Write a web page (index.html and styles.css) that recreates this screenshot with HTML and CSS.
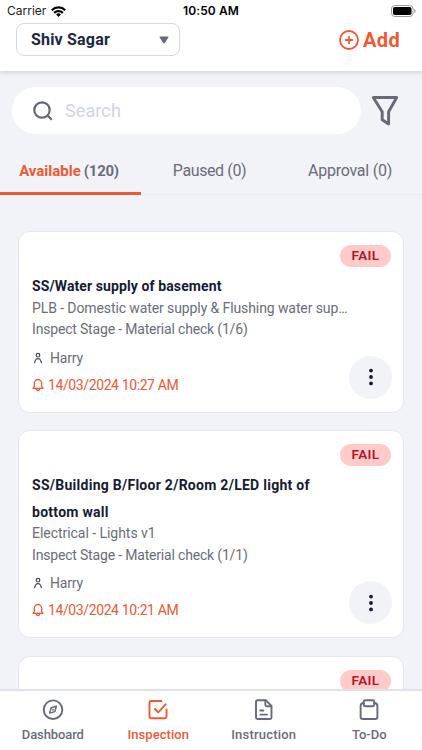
FILE: index.html
```html
<!DOCTYPE html>
<html lang="en">
<head>
<meta charset="utf-8">
<title>Inspection</title>
<link rel="stylesheet" href="styles.css">
</head>
<body>
<svg class="sprite" aria-hidden="true">
  <symbol id="person" viewBox="0 0 10 12"><g fill="none" stroke="#3f4654" stroke-width="1.2" stroke-linecap="round" stroke-linejoin="round"><circle cx="5" cy="3.2" r="1.8"/><path d="M1.6 10.6 2.4 8.400Q3 6.700 5 6.700T7.600 8.400L8.400 10.600"/></g></symbol>
  <symbol id="bell" viewBox="0 0 12 14"><g fill="none" stroke="#ee5934" stroke-width="1.3" stroke-linecap="round" stroke-linejoin="round"><path d="M1 10.300 2.300 8.600V5.200a3.700 3.700 0 0 1 7.400 0v3.400L11 10.300Z"/><path d="M4.300 10.500v.3a1.700 1.700 0 0 0 3.400 0v-.3"/></g></symbol>
  <symbol id="dots" viewBox="0 0 4 18"><g fill="#161b33"><circle cx="2" cy="2.600" r="1.900"/><circle cx="2" cy="9" r="1.900"/><circle cx="2" cy="15.400" r="1.900"/></g></symbol>
</svg>
<header class="header">
  <div class="status">
    <div class="status-left"><span class="carrier">Carrier</span>
      <svg width="15" height="11" viewBox="0 0 15 11"><g fill="none" stroke="#000" stroke-width="2.200"><path d="M.8 4.200a9.500 9.500 0 0 1 13.400 0"/><path d="M3.200 6.900a6.100 6.100 0 0 1 8.600 0"/></g><path d="M7.500 11 5.100 8.500a3.400 3.400 0 0 1 4.800 0Z"/></svg>
    </div>
    <span class="clock">10:50 AM</span>
    <div class="status-right"><svg width="26" height="12" viewBox="0 0 26 12"><rect x=".5" y=".5" width="21.500" height="11" rx="3.300" fill="#fff" stroke="#999"/><rect x="2" y="2" width="18.500" height="8" rx="1.800"/><path d="M23.300 4v4q1.400-.6 1.400-2t-1.400-2Z" fill="#999"/></svg></div>
  </div>
  <div class="toolbar">
    <div class="select"><span>Shiv Sagar</span><svg width="10" height="8" viewBox="0 0 10 8"><path d="M1.400.5h7.200q1.300 0 .7 1.100L6 6.800q-1 1.200-2 0L.7 1.600Q.1.500 1.400.5Z" fill="#666b78"/></svg></div>
    <div class="add"><svg width="20" height="20" viewBox="0 0 20 20" fill="none" stroke="#ee5934" stroke-width="1.800" stroke-linecap="round"><circle cx="10" cy="10" r="9"/><path d="M6.800 10h6.400M10 6.800v6.400"/></svg><span>Add</span></div>
  </div>
</header>
<main class="content">
  <div class="search-row">
    <div class="search"><svg width="20" height="20" viewBox="0 0 20 20" fill="none" stroke="#626773" stroke-width="2.200" stroke-linecap="square"><circle cx="9" cy="9" r="7.700"/><path d="m14.800 14.800 3.200 3.200"/></svg><span>Search</span></div>
    <svg class="filter" width="28" height="32" viewBox="0 0 28 32" fill="none" stroke="#666a77" stroke-width="2.900" stroke-linejoin="round"><path d="M2.300 2.500h23.400L17.600 16.800v12.200l-6.400-4.300v-7.900Z"/></svg>
  </div>
  <nav class="tabs">
    <div class="tab active"><span class="name">Available</span><span class="count">(120)</span></div>
    <div class="tab paused"><span>Paused (0)</span></div>
    <div class="tab approval"><span>Approval (0)</span></div>
  </nav>
  <section class="cards">
    <article class="card">
      <span class="badge">FAIL</span>
      <h2 class="t1">SS/Water supply of basement</h2>
      <p class="d1">PLB - Domestic water supply &amp; Flushing water sup…</p>
      <p class="stage">Inspect Stage - Material check (1/6)</p>
      <div class="foot">
        <div class="meta">
          <div class="who"><svg width="12" height="12"><use href="#person"/></svg><span>Harry</span></div>
          <div class="when"><svg width="12" height="14"><use href="#bell"/></svg><span>14/03/2024 10:27 AM</span></div>
        </div>
        <div class="more"><svg width="4" height="18"><use href="#dots"/></svg></div>
      </div>
    </article>
    <article class="card">
      <span class="badge">FAIL</span>
      <h2 class="t2">SS/Building B/Floor 2/Room 2/LED light of<br>bottom wall</h2>
      <p class="d2">Electrical - Lights v1</p>
      <p class="stage">Inspect Stage - Material check (1/1)</p>
      <div class="foot">
        <div class="meta">
          <div class="who"><svg width="12" height="12"><use href="#person"/></svg><span>Harry</span></div>
          <div class="when"><svg width="12" height="14"><use href="#bell"/></svg><span>14/03/2024 10:21 AM</span></div>
        </div>
        <div class="more"><svg width="4" height="18"><use href="#dots"/></svg></div>
      </div>
    </article>
    <article class="card peek">
      <span class="badge">FAIL</span>
    </article>
  </section>
</main>
<nav class="bottom">
  <div class="item"><svg width="22" height="22" viewBox="0 0 22 22" fill="none" stroke="#666b78" stroke-width="1.900" stroke-linejoin="round"><circle cx="11" cy="10.700" r="9.300"/><path d="m14.400 7.300-1.500 5.300-5.300 1.500 1.500-5.300Z" stroke-width="1.500"/><circle cx="11" cy="10.700" r=".7" stroke-width="1"/></svg><span class="n1">Dashboard</span></div>
  <div class="item on"><svg width="22" height="22" viewBox="0 0 22 22" fill="none" stroke="#ee5934" stroke-width="1.900" stroke-linecap="round" stroke-linejoin="round"><path d="M14.500 2H4Q2.500 2 2.500 3.500v14.200q0 1.500 1.500 1.500h14q1.500 0 1.500-1.500V10.500"/><path d="m8 10 3.200 3.300 7.500-8"/></svg><span class="n2">Inspection</span></div>
  <div class="item"><svg width="22" height="22" viewBox="0 0 22 22" fill="none" stroke="#666b78" stroke-width="1.900" stroke-linecap="round" stroke-linejoin="round"><path d="M4.500 1.200h8.300l5.700 5.800v11.500q0 1.500-1.500 1.500H4.500Q3 20 3 18.500V2.700Q3 1.200 4.500 1.200Z"/><path d="M12.300 1.500v4.300q0 1.500 1.500 1.500h4.400M7.300 11.500h3M7.300 15.600h6.700"/></svg><span class="n3">Instruction</span></div>
  <div class="item"><svg width="22" height="22" viewBox="0 0 22 22" fill="none" stroke="#666b78" stroke-width="1.900" stroke-linecap="round" stroke-linejoin="round"><rect x="5.800" y="1.200" width="10.400" height="6" rx="1.400"/><path d="M5.800 4q-3.200 0-3.200 3v10.700q0 2.300 2.300 2.300h12.200q2.300 0 2.300-2.300V7q0-3-3.200-3"/></svg><span class="n4">To-Do</span></div>
</nav>
</body>
</html>
```
FILE: styles.css
```css
* { box-sizing: border-box; }
body {
  margin: 0;
  height: 750px;
  display: flex;
  flex-direction: column;
  overflow: hidden;
  background: #f2f3f8;
  font-family: Roboto, "Liberation Sans", sans-serif;
  color: #6a6d78;
}
svg { display: block; flex: none; }
.sprite { width: 0; height: 0; position: absolute; }
span, h2, p { white-space: nowrap; }

.header {
  height: 71px;
  flex: none;
  background: #fff;
  box-shadow: 0 1px 5px rgba(60, 65, 90, .22);
  z-index: 1;
}
.status {
  height: 22px;
  display: grid;
  grid-template-columns: 1fr auto 1fr;
  align-items: center;
  padding: 0 5px 0 7px;
  font: 400 12px/22px Inter, "Liberation Sans", sans-serif;
  color: #000;
}
.status-left { display: flex; align-items: center; gap: 5px; }
.carrier { color: #222; }
.clock { font-weight: 600; letter-spacing: .12px; margin-left: -2px; }
.status-right { display: flex; justify-content: flex-end; }
.toolbar {
  display: flex;
  justify-content: space-between;
  align-items: center;
  padding: 1px 22px 0 16px;
}
.select {
  width: 164px;
  height: 33px;
  display: flex;
  align-items: center;
  justify-content: space-between;
  padding: 0 10px 0 14px;
  border: 1px solid #d5d9e2;
  border-radius: 8px;
  font-size: 16px;
  font-weight: 700;
  letter-spacing: .19px;
  color: #202642;
}
.add {
  display: flex;
  align-items: center;
  gap: 4px;
  font-size: 20px;
  font-weight: 700;
  letter-spacing: .34px;
  color: #ee5934;
}

.content { flex: 1; min-height: 0; overflow: hidden; }
.search-row {
  display: flex;
  align-items: center;
  gap: 10px;
  padding: 16px 0 0 12px;
}
.search {
  width: 349px;
  height: 47px;
  display: flex;
  align-items: center;
  gap: 12px;
  padding-left: 21px;
  border-radius: 24px;
  background: #fff;
  font-size: 18px;
  letter-spacing: .1px;
  color: #d0d5df;
}
.tabs {
  display: grid;
  grid-template-columns: 141px 1fr 141px;
  height: 61px;
  border-bottom: 1px solid #e9ebf0;
}
.tab {
  display: flex;
  justify-content: center;
  align-items: center;
  padding: 11px 3px 0 0;
  font-size: 16px;
}
.tab.active {
  height: 61px;
  gap: 3px;
  padding-top: 16px;
  border-bottom: 3px solid #ee5934;
  font-size: 15px;
  font-weight: 700;
}
.active .name { color: #ee5934; }
.active .count { letter-spacing: -.26px; }
.paused { letter-spacing: -.4px; }
.approval { letter-spacing: -.24px; }

.cards {
  display: flex;
  flex-direction: column;
  gap: 17.5px;
  padding: 36px 18px 0;
}
.card {
  display: flex;
  flex-direction: column;
  flex: none;
  padding: 13px 10px 13px 13px;
  border: 1px solid #e6e8ef;
  border-radius: 12px;
  background: #fff;
}
.badge {
  align-self: flex-end;
  width: 51px;
  height: 22px;
  margin: 0 2px 6px 0;
  border-radius: 11px;
  background: #ffcbc9;
  color: #b4132b;
  font-size: 13.5px;
  font-weight: 600;
  line-height: 21px;
  letter-spacing: .35px;
  text-align: center;
}
.card h2 {
  margin: 0;
  font-size: 14px;
  line-height: 26.5px;
  font-weight: 700;
  color: #161b33;
}
.t1 { letter-spacing: .105px; }
.t2 { letter-spacing: .27px; }
.card p {
  margin: 0 0 4px;
  font-size: 14px;
  line-height: 17.5px;
}
.card .d1 { letter-spacing: -.098px; }
.card .d2 { letter-spacing: -.04px; }
.card .stage { letter-spacing: -.18px; margin-bottom: 10px; }
.foot { display: flex; justify-content: space-between; align-items: flex-end; }
.meta { height: 50px; }
.who, .when {
  display: flex;
  align-items: center;
  height: 18px;
  font-size: 14px;
  line-height: 18px;
}
.who { gap: 6px; letter-spacing: -.17px; margin-bottom: 9px; }
.when { gap: 4px; letter-spacing: -.39px; color: #ee5934; }
.more {
  width: 43px;
  height: 43px;
  margin-right: 1px;
  border-radius: 50%;
  display: flex;
  align-items: center;
  justify-content: center;
  background: #f2f3f8;
}
.peek { height: 120px; }

.bottom {
  flex: none;
  height: 61px;
  display: grid;
  grid-template-columns: repeat(4, 1fr);
  border-top: 2px solid #dfe2e9;
  background: #fff;
}
.item {
  display: flex;
  flex-direction: column;
  align-items: center;
  gap: 6px;
  padding-top: 8px;
  font-size: 13px;
  line-height: 16px;
  font-weight: 500;
}
.item.on { color: #ee5934; }
.n1 { letter-spacing: -.1px; }
.n2 { letter-spacing: .06px; }
.n3 { letter-spacing: .2px; }
```
